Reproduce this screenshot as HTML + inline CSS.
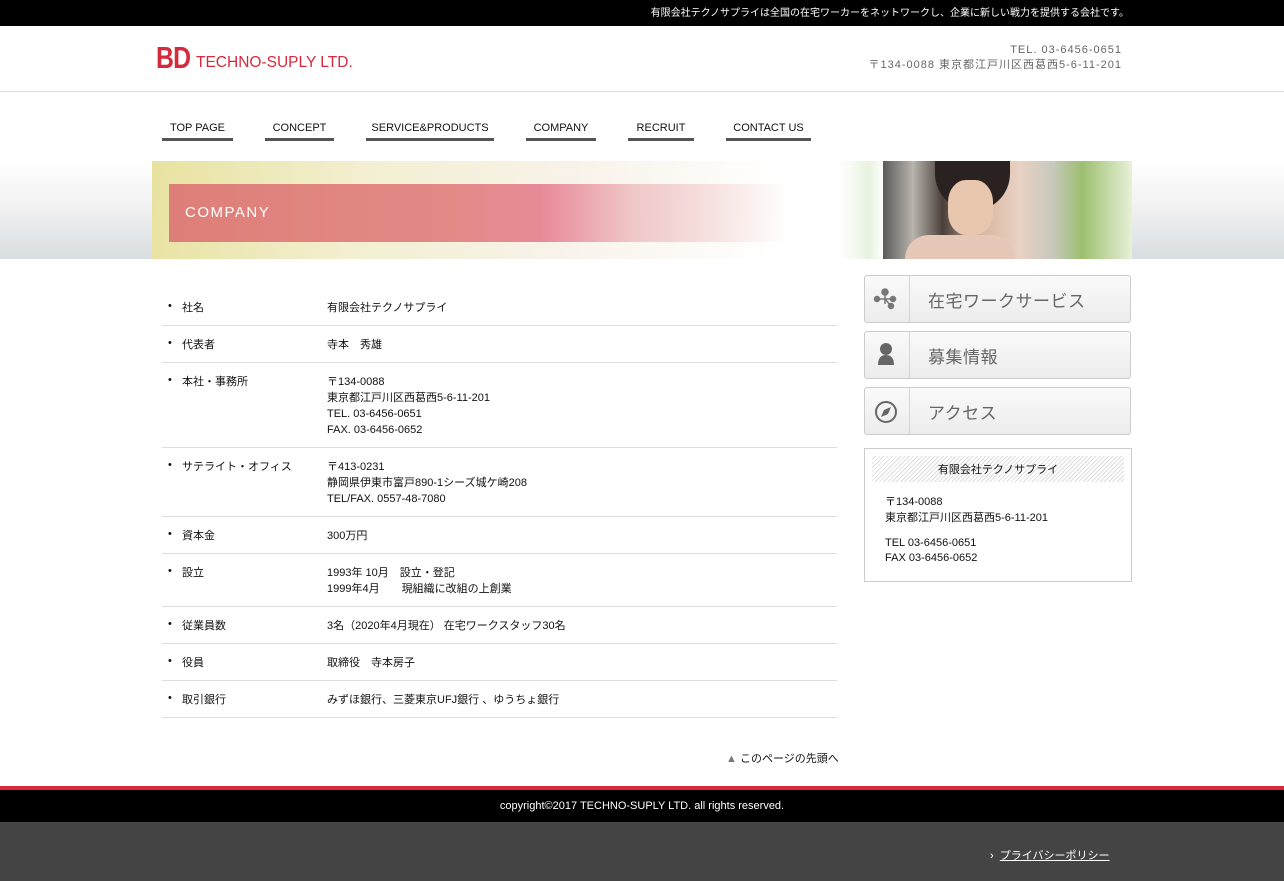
<!DOCTYPE html>
<html><head><meta charset="utf-8"><style>
*{margin:0;padding:0;box-sizing:border-box}
body{width:1284px;height:881px;overflow:hidden;background:#fff;font-family:"Liberation Sans","Noto Sans CJK JP",sans-serif;color:#111;position:relative}
.abs{position:absolute}
.top{left:0;top:0;width:1284px;height:26px;background:#000;color:#fff;font-size:10px;line-height:28px;text-align:right;padding-right:155px}
.hdr{top:26px;left:0;width:1284px;height:66px;border-bottom:1px solid #ddd}
.nav a{position:absolute;top:120px;font-size:11px;color:#111;text-decoration:none;text-align:center;height:21px;border-bottom:3px solid #555;line-height:16px}
.row{position:absolute;left:162px;width:675px;border-bottom:1px solid #ddd;font-size:11px;line-height:16px}
.row .b{position:absolute;left:6px;font-size:11px}
.row .l{position:absolute;left:20px}
.row .v{position:absolute;left:165px}
.btn{position:absolute;left:864px;width:267px;height:48px;border:1px solid #ccc;border-radius:3px;background:linear-gradient(#fafafa,#ececec)}
.btn .ic{position:absolute;left:0;top:0;width:45px;height:46px;border-right:1px solid #d4d4d4}
.btn .t{position:absolute;left:63px;top:11px;font-size:17px;color:#666;letter-spacing:0.5px}
</style></head><body>
<div class="abs top">有限会社テクノサプライは全国の在宅ワーカーをネットワークし、企業に新しい戦力を提供する会社です。</div>
<div class="abs hdr"></div>
<div class="abs" style="left:156px;top:42px;color:#d42a3c;font-weight:bold;font-size:31px;letter-spacing:-1px;transform:scaleX(0.8);transform-origin:left;line-height:32px">BD</div>
<div class="abs" style="left:196px;top:54px;color:#d42a3c;font-size:15.5px;line-height:18px">TECHNO-SUPLY LTD.</div>
<div class="abs" style="right:162px;top:43px;color:#666;font-size:11px;line-height:15px;text-align:right;letter-spacing:1px">TEL. 03-6456-0651<br>〒134-0088 東京都江戸川区西葛西5-6-11-201</div>
<div class="nav">
<a style="left:162px;width:71px">TOP PAGE</a>
<a style="left:265px;width:69px">CONCEPT</a>
<a style="left:366px;width:128px">SERVICE&amp;PRODUCTS</a>
<a style="left:526px;width:70px">COMPANY</a>
<a style="left:628px;width:66px">RECRUIT</a>
<a style="left:726px;width:85px">CONTACT US</a>
</div>
<div class="abs" style="left:0;top:161px;width:1284px;height:98px;background:linear-gradient(#fff,#f0f0f0 50%,#d8dee2)"></div>
<div class="abs" style="left:152px;top:161px;width:690px;height:98px;background:linear-gradient(100deg,#e8e2a0 0%,#f3efd0 30%,#f8f3ea 60%,#fff 90%)"></div>
<div class="abs" style="left:169px;top:184px;width:620px;height:58px;background:linear-gradient(90deg,#de7e78 0%,#e38a86 45%,#e78a98 60%,#f0c8c8 75%,rgba(255,255,255,0) 100%)"></div>
<div class="abs" style="left:185px;top:204px;color:#fff;font-size:15px;letter-spacing:1.5px">COMPANY</div>
<div class="abs" style="left:840px;top:161px;width:292px;height:98px;background:linear-gradient(90deg,#fff 0%,#e8f2df 10%,#fff 15%)"></div>
<div class="abs" style="left:883px;top:161px;width:249px;height:98px;background:linear-gradient(90deg,#5a5a58 0%,#b8b4ae 12%,#4a403a 24%,#d8b8a0 40%,#e8d2c4 55%,#c8c8bc 68%,#9cc070 80%,#e8f0d8 100%)"></div>
<div class="abs" style="left:935px;top:161px;width:75px;height:50px;border-radius:0 0 38px 38px;background:#2a2220"></div>
<div class="abs" style="left:948px;top:180px;width:45px;height:55px;border-radius:40%;background:#e9c6ae"></div>
<div class="abs" style="left:905px;top:235px;width:110px;height:24px;border-radius:40px 40px 0 0;background:#e6c8b8"></div>

<div class="row" style="top:290px;height:36px"><span class="b" style="top:8px">•</span><span class="l" style="top:10px">社名</span><span class="v" style="top:10px">有限会社テクノサプライ</span></div>
<div class="row" style="top:326px;height:37px"><span class="b" style="top:9px">•</span><span class="l" style="top:11px">代表者</span><span class="v" style="top:11px">寺本　秀雄</span></div>
<div class="row" style="top:363px;height:85px"><span class="b" style="top:9px">•</span><span class="l" style="top:11px">本社・事務所</span><span class="v" style="top:11px">〒134-0088<br>東京都江戸川区西葛西5-6-11-201<br>TEL. 03-6456-0651<br>FAX. 03-6456-0652</span></div>
<div class="row" style="top:448px;height:69px"><span class="b" style="top:9px">•</span><span class="l" style="top:11px">サテライト・オフィス</span><span class="v" style="top:11px">〒413-0231<br>静岡県伊東市富戸890-1シーズ城ケ崎208<br>TEL/FAX. 0557-48-7080</span></div>
<div class="row" style="top:517px;height:37px"><span class="b" style="top:9px">•</span><span class="l" style="top:11px">資本金</span><span class="v" style="top:11px">300万円</span></div>
<div class="row" style="top:554px;height:53px"><span class="b" style="top:9px">•</span><span class="l" style="top:11px">設立</span><span class="v" style="top:11px">1993年 10月　設立・登記<br>1999年4月　　現組織に改組の上創業</span></div>
<div class="row" style="top:607px;height:37px"><span class="b" style="top:9px">•</span><span class="l" style="top:11px">従業員数</span><span class="v" style="top:11px">3名（2020年4月現在） 在宅ワークスタッフ30名</span></div>
<div class="row" style="top:644px;height:37px"><span class="b" style="top:9px">•</span><span class="l" style="top:11px">役員</span><span class="v" style="top:11px">取締役　寺本房子</span></div>
<div class="row" style="top:681px;height:37px"><span class="b" style="top:9px">•</span><span class="l" style="top:11px">取引銀行</span><span class="v" style="top:11px">みずほ銀行、三菱東京UFJ銀行 、ゆうちょ銀行</span></div>
<div class="abs" style="left:726px;top:750px;font-size:11px"><span style="color:#777">▲</span> このページの先頭へ</div>

<div class="btn" style="top:275px"><div class="ic"><svg width="45" height="46"><g fill="#777" stroke="#777" stroke-width="1.5"><line x1="20" y1="17" x2="20" y2="28"/><line x1="12" y1="23" x2="28" y2="23"/><line x1="20" y1="23" x2="26" y2="30"/><circle cx="20" cy="16" r="3"/><circle cx="12" cy="23" r="2.5"/><circle cx="28" cy="23" r="2.5"/><circle cx="26" cy="30" r="2.5"/></g></svg></div><div class="t">在宅ワークサービス</div></div>
<div class="btn" style="top:331px"><div class="ic"><svg width="45" height="46"><circle cx="21" cy="17" r="6" fill="#666"/><path d="M13 33 Q13 23 21 23 Q29 23 29 33Z" fill="#666"/></svg></div><div class="t">募集情報</div></div>
<div class="btn" style="top:387px"><div class="ic"><svg width="45" height="46"><circle cx="21" cy="24" r="10" fill="none" stroke="#666" stroke-width="2"/><path d="M26 19 L23 26 L16 29 L19 22Z" fill="#666"/></svg></div><div class="t">アクセス</div></div>
<div class="abs" style="left:864px;top:448px;width:268px;height:134px;border:1px solid #ccc"></div>
<div class="abs" style="left:872px;top:456px;width:252px;height:26px;background:repeating-linear-gradient(135deg,#fff 0 2px,#ddd 2px 3px);font-size:11px;text-align:center;line-height:28px"><span>有限会社テクノサプライ</span></div>
<div class="abs" style="left:885px;top:494px;font-size:11px;line-height:16px">〒134-0088<br>東京都江戸川区西葛西5-6-11-201</div>
<div class="abs" style="left:885px;top:536px;font-size:11px;line-height:15px">TEL 03-6456-0651<br>FAX 03-6456-0652</div>

<div class="abs" style="left:0;top:786px;width:1284px;height:4px;background:#d8283a"></div>
<div class="abs" style="left:0;top:790px;width:1284px;height:32px;background:#000;color:#fff;font-size:11px;text-align:center;line-height:32px">copyright©2017 TECHNO-SUPLY LTD. all rights reserved.</div>
<div class="abs" style="left:0;top:822px;width:1284px;height:59px;background:#444"></div>
<div class="abs" style="left:990px;top:847px;color:#fff;font-size:11px">›&nbsp;&nbsp;<span style="text-decoration:underline">プライバシーポリシー</span></div>
</body></html>
